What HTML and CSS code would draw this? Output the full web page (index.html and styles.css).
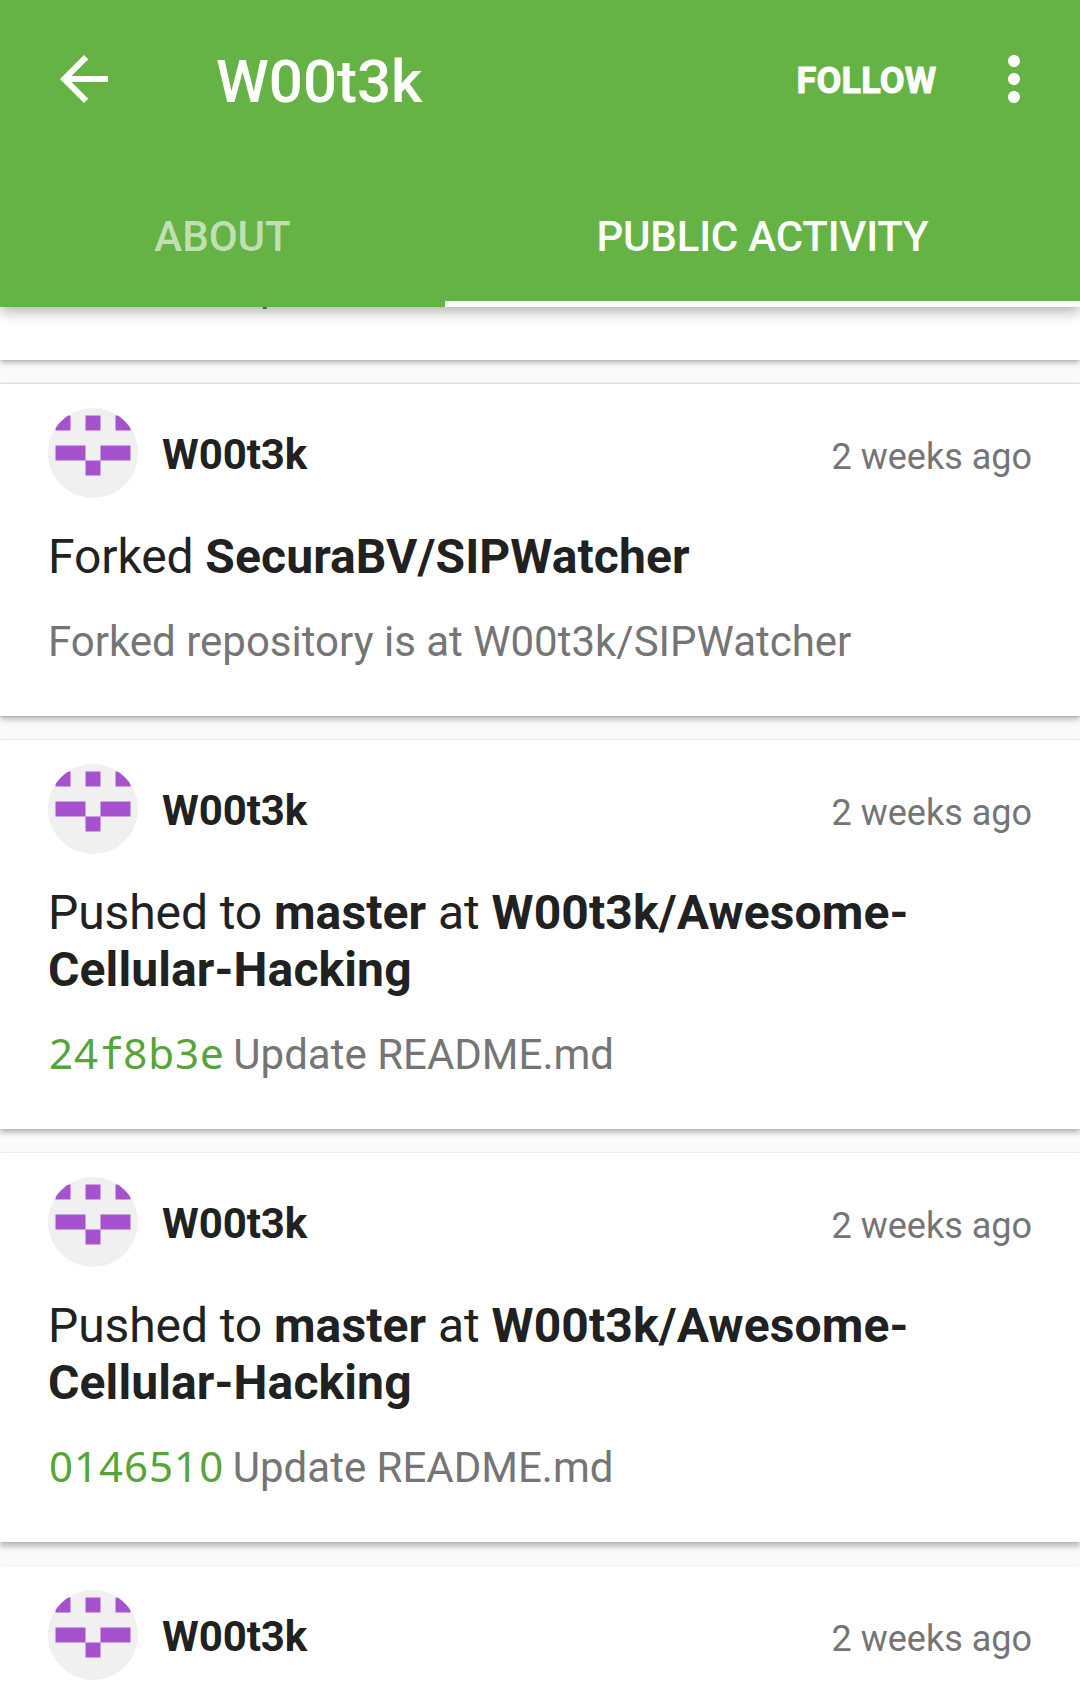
FILE: index.html
```html
<!DOCTYPE html>
<html lang="en">
<head>
<meta charset="utf-8">
<title>W00t3k</title>
<link rel="stylesheet" href="styles.css">
</head>
<body>
<svg class="defs" aria-hidden="true">
  <symbol id="identicon" viewBox="0 0 420 420">
    <rect width="420" height="420" fill="#f0f0f0"/>
    <path fill="#a652ce" d="M35 35h70v70H35zM175 35h70v70h-70zM315 35h70v70h-70zM35 175h140v70H35zM245 175h140v70H245zM175 245h70v70h-70z"/>
  </symbol>
</svg>

<header class="appbar">
  <div class="toolbar">
    <svg class="icon" viewBox="0 0 24 24"><path d="M20 11H7.83l5.59-5.59L12 4l-8 8 8 8 1.41-1.41L7.83 13H20v-2z"/></svg>
    <h1 class="toolbar-title">W00t3k</h1>
    <span class="follow">FOLLOW</span>
    <svg class="icon" viewBox="0 0 24 24"><path d="M12 8c1.1 0 2-.9 2-2s-.9-2-2-2-2 .9-2 2 .9 2 2 2zm0 2c-1.1 0-2 .9-2 2s.9 2 2 2 2-.9 2-2-.9-2-2-2zm0 6c-1.1 0-2 .9-2 2s.9 2 2 2 2-.9 2-2-.9-2-2-2z"/></svg>
  </div>
  <nav class="tabs">
    <span class="tab tab-about">ABOUT</span>
    <span class="tab tab-activity active">PUBLIC ACTIVITY</span>
  </nav>
</header>

<main class="feed">
  <article class="card scrolled shade-1">
    <p class="detail"><span class="hash">0146510</span> Update README.md</p>
  </article>

  <article class="card shade-2">
    <div class="card-head">
      <svg class="avatar"><use href="#identicon"/></svg>
      <div class="meta"><b class="name">W00t3k</b><span class="time">2 weeks ago</span></div>
    </div>
    <h2 class="event">Forked <b>SecuraBV/SIPWatcher</b></h2>
    <p class="detail">Forked repository is at W00t3k/SIPWatcher</p>
  </article>

  <article class="card shade-3">
    <div class="card-head">
      <svg class="avatar"><use href="#identicon"/></svg>
      <div class="meta"><b class="name">W00t3k</b><span class="time">2 weeks ago</span></div>
    </div>
    <h2 class="event">Pushed to <b>master</b> at <b>W00t3k/Awesome-<br>Cellular-Hacking</b></h2>
    <p class="detail"><span class="hash">24<span class="mono">f</span>8b3e</span> Update README.md</p>
  </article>

  <article class="card shade-4">
    <div class="card-head">
      <svg class="avatar"><use href="#identicon"/></svg>
      <div class="meta"><b class="name">W00t3k</b><span class="time">2 weeks ago</span></div>
    </div>
    <h2 class="event">Pushed to <b>master</b> at <b>W00t3k/Awesome-<br>Cellular-Hacking</b></h2>
    <p class="detail"><span class="hash">0146510</span> Update README.md</p>
  </article>

  <article class="card last shade-4">
    <div class="card-head">
      <svg class="avatar"><use href="#identicon"/></svg>
      <div class="meta"><b class="name">W00t3k</b><span class="time">2 weeks ago</span></div>
    </div>
  </article>
</main>
</body>
</html>
```
FILE: styles.css
```css
* { box-sizing: border-box; }

body {
  display: flex;
  flex-direction: column;
  margin: 0;
  height: 1699px;
  overflow: hidden;
  background: #fafafa;
  color: #212121;
  font-family: Roboto, sans-serif;
}

h1, h2, p { margin: 0; }
.defs { display: none; }

/* App bar */
.appbar {
  position: relative;
  z-index: 1;
  flex: none;
  height: 307px;
  background: #66b345;
  color: #fff;
  box-shadow: 0 5px 13px rgba(0, 0, 0, .3);
}
.toolbar {
  display: flex;
  align-items: center;
  height: 163px;
  padding: 0 30px 5px 48px;
}
.icon { width: 72px; height: 72px; fill: #fff; }
.toolbar-title {
  flex: 1;
  margin-left: 96px;
  padding-top: 5px;
  font-size: 60px;
  font-weight: 500;
  line-height: 70px;
}
.follow {
  margin-right: 41.5px;
  padding-top: 3px;
  font-size: 36px;
  font-weight: 700;
  line-height: 42px;
  letter-spacing: .2px;
  -webkit-text-stroke: .9px #fff;
}
.tabs { display: flex; height: 144px; }
.tab {
  padding-top: 49px;
  text-align: center;
  font-size: 42px;
  font-weight: 500;
  line-height: 50px;
  color: rgba(255, 255, 255, .6);
}
.tab-about { width: 445px; }
.tab-activity { flex: 1; letter-spacing: -.2px; }
.tab.active { color: #fff; border-bottom: 6px solid #fff; }

/* Activity feed */
.feed {
  flex: 1;
  min-height: 0;
  display: flex;
  flex-direction: column;
  gap: 24px;
  overflow: hidden;
}
.card {
  flex: none;
  padding: 24px 48px 49px;
  background: #fff;
}
.scrolled {
  display: flex;
  flex-direction: column;
  justify-content: flex-end;
  height: 53px;
  padding-top: 0;
}
.last { flex: 1 0 0; padding-bottom: 0; }
.shade-1 { box-shadow: 0 2px 6px rgba(0, 0, 0, .32), 0 0 2px rgba(0, 0, 0, .1); }
.shade-2 { box-shadow: 0 3px 6px rgba(0, 0, 0, .28), 0 0 2px rgba(0, 0, 0, .24); }
.shade-3 { box-shadow: 0 4px 5px rgba(0, 0, 0, .24), 0 0 2px rgba(0, 0, 0, .16); }
.shade-4 { box-shadow: 0 5px 5px rgba(0, 0, 0, .23), 0 0 2px rgba(0, 0, 0, .14); }

.card-head { display: flex; gap: 24px; height: 90px; }
.avatar { width: 90px; height: 90px; border-radius: 50%; }
.meta {
  flex: 1;
  display: flex;
  justify-content: space-between;
  align-items: baseline;
  padding-top: 22px;
  line-height: 50px;
}
.name { font-size: 42px; letter-spacing: -.1px; }
.time { font-size: 36px; color: #757575; }
.event {
  margin-top: 30px;
  font-size: 48px;
  font-weight: 400;
  line-height: 57px;
  letter-spacing: -.1px;
}
.event b { letter-spacing: .12px; }
.detail {
  margin-top: 32px;
  font-size: 42px;
  line-height: 50px;
  color: #757575;
  white-space: nowrap;
}
.hash {
  margin: 0 -1.8px 0 1px;
  font-family: "Noto Sans", sans-serif;
  line-height: 0;
  letter-spacing: 1px;
  color: #58a33a;
}
.mono {
  font-family: "DejaVu Sans Mono", monospace;
  letter-spacing: -1.2px;
}
```
